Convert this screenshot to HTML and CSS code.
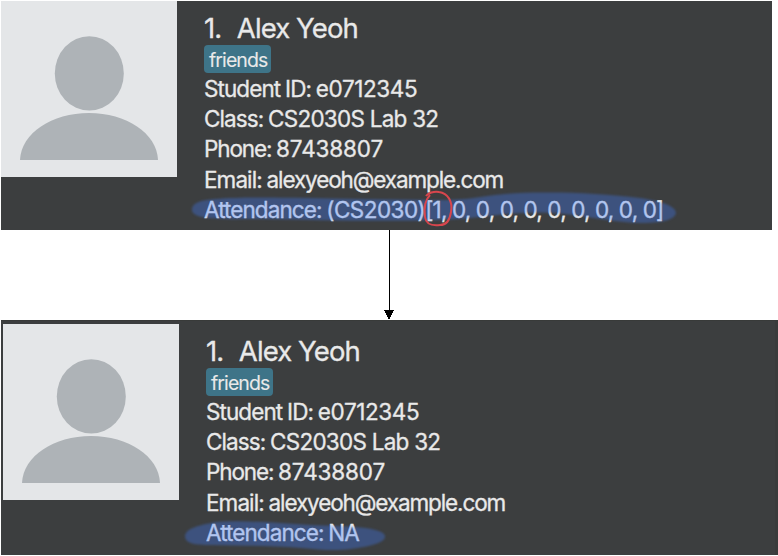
FILE: index.html
```html
<!DOCTYPE html>
<html lang="en">
<head>
<meta charset="utf-8">
<title>Attendance</title>
<link rel="stylesheet" href="styles.css">
</head>
<body>
<main class="page">
  <section class="card card-before">
    <svg class="avatar" viewBox="0 0 176 176"><rect width="176" height="176" fill="#e4e6e8"/><ellipse cx="88.3" cy="72.4" rx="34.5" ry="37.2" fill="#aeb3b7"/><path d="M19 159C20 132 51 112 88 112S156 132 157 159Z" fill="#aeb3b7"/></svg>
    <div class="details">
      <h2 class="name"><span class="index">1.</span><span>Alex Yeoh</span></h2>
      <span class="tag">friends</span>
      <p class="line">Student ID: <span class="id">e0712345</span></p>
      <p class="line">Class: <span class="class">CS2030S Lab 32</span></p>
      <p class="line line-phone">Phone: <span class="phone">87438807</span></p>
      <p class="line">Email: <span class="email">alexyeoh@example.com</span></p>
      <p class="line">Attendance: <span class="course">(CS2030)</span><span class="marks">[1, 0, 0, 0, 0, 0, 0, 0, 0, 0]</span></p>
    </div>
    <svg class="marker" viewBox="0 0 771 229"><path class="stroke" d="M192 210C192 202 203 200 215 199C246 196 300 198 360 199L440 200C470 200 482 196 505 194C545 191 600 193 640 198C661 201 676 206 676 213C674 221 659 223 640 223C610 222 588 216 556 213C515 210 480 219 440 220C375 222 320 220 260 219C230 219 192 221 192 210Z"/><path class="circle" d="M430 195C425 200 424 209 425 217C426 224 432 226 440 225C447 225 450 219 451 212C453 202 448 193 439 192C434 191 428 193 426 196"/></svg>
  </section>
  <svg class="arrow" viewBox="0 0 12 90"><path d="M6 0V82" stroke="#000" stroke-width="1"/><path d="M.5 79.500H11.500L6 90Z"/></svg>
  <section class="card card-after">
    <svg class="avatar" viewBox="0 0 176 176"><rect width="176" height="176" fill="#e4e6e8"/><ellipse cx="88.3" cy="72.4" rx="34.5" ry="37.2" fill="#aeb3b7"/><path d="M19 159C20 132 51 112 88 112S156 132 157 159Z" fill="#aeb3b7"/></svg>
    <div class="details">
      <h2 class="name"><span class="index">1.</span><span>Alex Yeoh</span></h2>
      <span class="tag">friends</span>
      <p class="line">Student ID: <span class="id">e0712345</span></p>
      <p class="line">Class: <span class="class">CS2030S Lab 32</span></p>
      <p class="line line-phone">Phone: <span class="phone">87438807</span></p>
      <p class="line">Email: <span class="email">alexyeoh@example.com</span></p>
      <p class="line">Attendance: <span>NA</span></p>
    </div>
    <svg class="marker" viewBox="0 0 777 235"><path class="stroke" d="M184 216C185 208 199 205 215 202C243 200 275 203 310 205C345 206 383 207 384 216C385 224 364 227 350 229C335 231 320 230 300 228C267 225 235 226 210 225C195 225 184 224 184 216Z"/></svg>
  </section>
</main>
</body>
</html>
```
FILE: styles.css
```css
* { box-sizing: border-box; }
body { margin: 0; background: #fff; font-family: Inter, "Liberation Sans", sans-serif; }
.page { width: 778px; height: 556px; padding: 1px 0 1px 1px; overflow: hidden; }
.card { position: relative; display: flex; gap: 27px; background: #3c3e3f; color: #e9e9e9; -webkit-text-stroke: .3px #e9e9e9; }
.card-before { width: 771px; height: 229px; }
.card-after { width: 777px; height: 235px; padding: 3px 0 0 2px; border-top: 1px solid #383a39; border-right: 3px solid #393b3b; }
.avatar { display: block; flex: none; width: 176px; height: 176px; }
.details { padding-top: 10px; white-space: nowrap; }
.name { display: flex; gap: 15.500px; margin: 0; font-size: 27.500px; line-height: 34px; font-weight: 400; letter-spacing: -0.9px; }
.tag { display: block; width: 67px; height: 28px; margin: 0 0 1px -0.500px; border-radius: 4px; background: #3e7488; padding-left: 5.500px; font-size: 19.500px; line-height: 30px; letter-spacing: -0.9px; -webkit-text-stroke-width: .1px; }
.line { margin: 0; font-size: 22.500px; line-height: 30.200px; letter-spacing: -0.92px; word-spacing: -0.6px; }
.line-phone { letter-spacing: -1.1px; }
.id { letter-spacing: -0.4px; }
.class { word-spacing: 0; letter-spacing: -0.75px; }
.phone { letter-spacing: -0.15px; }
.email { letter-spacing: -1.12px; }
.course { letter-spacing: -0.55px; }
.marks { word-spacing: -0.2px; letter-spacing: -0.8px; }
.marker { position: absolute; left: -1px; top: -1px; width: 771px; height: 229px; overflow: visible; }
.card-after .marker { left: 0; top: -1px; width: 777px; height: 235px; }
.stroke { fill: rgba(63, 125, 255, .33); filter: blur(1px); }
.circle { fill: none; stroke: #d8464d; stroke-width: 2; }
.arrow { display: block; width: 12px; height: 90px; margin-left: 382px; shape-rendering: crispEdges; }
```
